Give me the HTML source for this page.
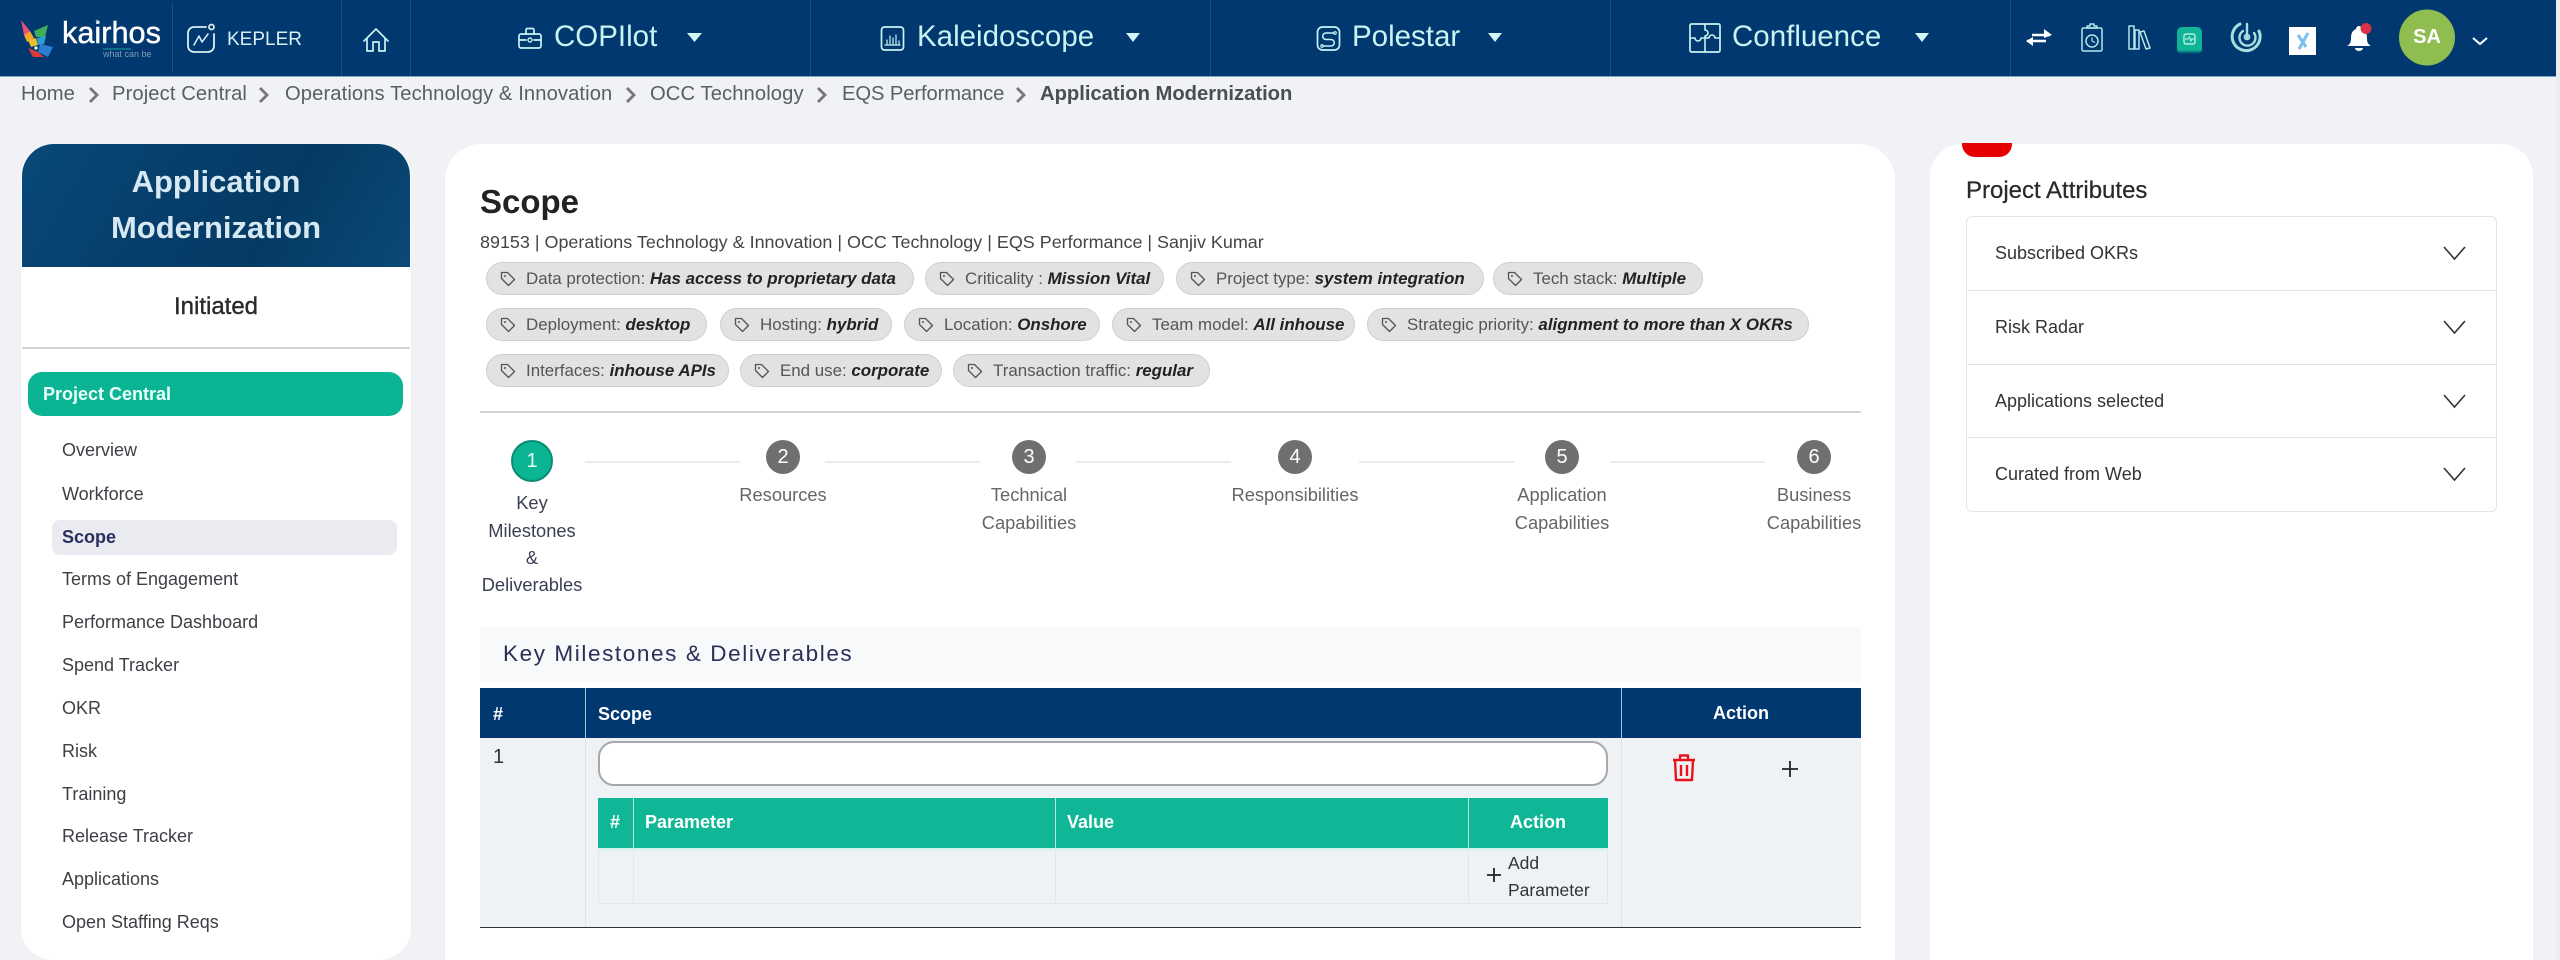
<!DOCTYPE html>
<html lang="en"><head><meta charset="utf-8"><title>Scope - Application Modernization</title>
<style>
html,body{margin:0;padding:0;width:2560px;height:960px;overflow:hidden;background:#f0f2f5;font-family:"Liberation Sans",sans-serif}
.a{position:absolute}
.t{position:absolute;white-space:nowrap;line-height:30px;height:30px}
.c{transform:translateX(-50%);text-align:center}
.hdr{left:0;top:0;width:2556px;height:76px;background:#00386f;border-bottom:1px solid #7fa3c4}
.dv{top:0;width:1px;height:76px;background:#1c4f83}
.nav{font-size:29.5px;color:#c9f3f3}
.bc{font-size:20.2px;color:#5a5e63}
.panel{background:#fff;top:144px;height:816px}
.mi{left:62px;font-size:18px;color:#3c3f44}
.chip{position:absolute;height:33px;box-sizing:border-box;background:#e2e2e2;border:1px solid #cfcfcf;border-radius:17px;padding-left:39px;font-size:16.9px;line-height:31px;color:#555;white-space:nowrap}
.chip b{font-style:italic;color:#222}
.chip svg{position:absolute;left:13px;top:8px}
.st{font-size:18.3px;color:#666}
.circ{position:absolute;top:440px;width:34px;height:34px;border-radius:50%;background:#6f6f6f;color:#fff;font-size:20px;line-height:34px;text-align:center}
.line{position:absolute;top:461px;height:2px;background:#ebebeb}
.th{font-size:18px;font-weight:bold;color:#fff}
.acc{left:1995px;font-size:18px;color:#333}
</style></head><body>

<div class="a hdr"></div>
<div class="a dv" style="left:172px;top:4px;height:68px"></div>
<div class="a dv" style="left:341px"></div>
<div class="a dv" style="left:410px"></div>
<div class="a dv" style="left:810px"></div>
<div class="a dv" style="left:1210px"></div>
<div class="a dv" style="left:1610px"></div>
<div class="a dv" style="left:2010px"></div>

<div class="t" style="left:62px;top:18px;font-size:30.7px;color:#fff;-webkit-text-stroke:.4px #fff">kairhos</div>
<div class="t" style="left:103px;top:39px;font-size:9px;color:#7f9fb8">what can be</div>
<div class="t" style="left:227px;top:25px;font-size:19px;color:#d9eff2">KEPLER</div>

<div class="t nav" style="left:554px;top:22px">COPIlot</div>
<div class="t nav" style="left:917px;top:22px">Kaleidoscope</div>
<div class="t nav" style="left:1352px;top:22px">Polestar</div>
<div class="t nav" style="left:1732px;top:22px">Confluence</div>

<!-- breadcrumb -->
<div class="t bc" style="left:21px;top:79px">Home</div>
<div class="t bc" style="left:112px;top:79px;letter-spacing:.1px">Project Central</div>
<div class="t bc" style="left:285px;top:79px;letter-spacing:.1px">Operations Technology &amp; Innovation</div>
<div class="t bc" style="left:650px;top:79px;letter-spacing:.1px">OCC Technology</div>
<div class="t bc" style="left:842px;top:79px;letter-spacing:-.1px">EQS Performance</div>
<div class="t bc" style="left:1040px;top:79px;color:#4a4e53;font-weight:bold">Application Modernization</div>

<!-- left panel -->
<div class="a panel" style="left:21px;width:390px;border-radius:32px"></div>
<div class="a" style="left:22px;top:144px;width:388px;height:123px;border-radius:32px 32px 0 0;background:linear-gradient(120deg,#07497a 0%,#073f6c 35%,#053a63 65%,#0a4a76 100%)"></div>
<div class="t c" style="left:216px;top:167px;font-size:31px;font-weight:bold;color:#d6e8f2">Application</div>
<div class="t c" style="left:216px;top:213px;font-size:31px;font-weight:bold;color:#d6e8f2">Modernization</div>
<div class="t c" style="left:216px;top:292px;font-size:24px;color:#2b2b2b;-webkit-text-stroke:.4px #2b2b2b">Initiated</div>
<div class="a" style="left:22px;top:347px;width:388px;height:2px;background:#d6d6d6"></div>
<div class="a" style="left:28px;top:372px;width:375px;height:44px;border-radius:14px;background:#0bb594"></div>
<div class="t" style="left:43px;top:379px;font-size:18px;font-weight:bold;color:#eafff9">Project Central</div>
<div class="a" style="left:52px;top:520px;width:345px;height:35px;border-radius:8px;background:#e9ebf0"></div>
<div class="t mi" style="top:435px">Overview</div>
<div class="t mi" style="top:479px">Workforce</div>
<div class="t mi" style="top:522px;font-weight:bold;color:#2a2f5f">Scope</div>
<div class="t mi" style="top:564px">Terms of Engagement</div>
<div class="t mi" style="top:607px">Performance Dashboard</div>
<div class="t mi" style="top:650px">Spend Tracker</div>
<div class="t mi" style="top:693px">OKR</div>
<div class="t mi" style="top:736px">Risk</div>
<div class="t mi" style="top:779px">Training</div>
<div class="t mi" style="top:821px">Release Tracker</div>
<div class="t mi" style="top:864px">Applications</div>
<div class="t mi" style="top:907px">Open Staffing Reqs</div>

<!-- centre panel -->
<div class="a panel" style="left:445px;width:1450px;border-radius:36px 36px 0 0"></div>
<div class="t" style="left:480px;top:187px;font-size:33px;font-weight:bold;color:#222">Scope</div>
<div class="t" style="left:480px;top:227px;font-size:17.95px;color:#444">89153 | Operations Technology &amp; Innovation | OCC Technology | EQS Performance | Sanjiv Kumar</div>

<svg width="0" height="0" style="position:absolute"><defs><symbol id="tag" viewBox="0 0 16 16"><path d="M1.500 1.500H7.500L14.500 8.500 8.500 14.500 1.500 7.500Z" fill="none" stroke="#555" stroke-width="1.300" stroke-linejoin="round"/><circle cx="5" cy="5" r="1" fill="#555"/></symbol></defs></svg>

<div class="chip" style="left:486px;top:262px;width:428px"><svg width="16" height="16"><use href="#tag"/></svg>Data protection: <b>Has access to proprietary data</b></div>
<div class="chip" style="left:925px;top:262px;width:239px"><svg width="16" height="16"><use href="#tag"/></svg>Criticality : <b>Mission Vital</b></div>
<div class="chip" style="left:1176px;top:262px;width:308px"><svg width="16" height="16"><use href="#tag"/></svg>Project type: <b>system integration</b></div>
<div class="chip" style="left:1493px;top:262px;width:210px"><svg width="16" height="16"><use href="#tag"/></svg>Tech stack: <b>Multiple</b></div>
<div class="chip" style="left:486px;top:308px;width:221px"><svg width="16" height="16"><use href="#tag"/></svg>Deployment: <b>desktop</b></div>
<div class="chip" style="left:720px;top:308px;width:172px"><svg width="16" height="16"><use href="#tag"/></svg>Hosting: <b>hybrid</b></div>
<div class="chip" style="left:904px;top:308px;width:196px"><svg width="16" height="16"><use href="#tag"/></svg>Location: <b>Onshore</b></div>
<div class="chip" style="left:1112px;top:308px;width:243px"><svg width="16" height="16"><use href="#tag"/></svg>Team model: <b>All inhouse</b></div>
<div class="chip" style="left:1367px;top:308px;width:442px"><svg width="16" height="16"><use href="#tag"/></svg>Strategic priority: <b>alignment to more than X OKRs</b></div>
<div class="chip" style="left:486px;top:354px;width:243px"><svg width="16" height="16"><use href="#tag"/></svg>Interfaces: <b>inhouse APIs</b></div>
<div class="chip" style="left:740px;top:354px;width:202px"><svg width="16" height="16"><use href="#tag"/></svg>End use: <b>corporate</b></div>
<div class="chip" style="left:953px;top:354px;width:257px"><svg width="16" height="16"><use href="#tag"/></svg>Transaction traffic: <b>regular</b></div>

<div class="a" style="left:480px;top:411px;width:1381px;height:2px;background:#d2d2d2"></div>

<!-- stepper -->
<div class="a" style="left:511px;top:440px;width:38px;height:38px;border:2px solid #0a8d74;border-radius:50%;background:#0bb594;color:#e8fff8;font-size:20px;line-height:38px;text-align:center">1</div>
<div class="circ" style="left:766px">2</div>
<div class="circ" style="left:1012px">3</div>
<div class="circ" style="left:1278px">4</div>
<div class="circ" style="left:1545px">5</div>
<div class="circ" style="left:1797px">6</div>
<div class="line" style="left:585px;width:155px"></div>
<div class="line" style="left:825px;width:155px"></div>
<div class="line" style="left:1076px;width:155px"></div>
<div class="line" style="left:1359px;width:155px"></div>
<div class="line" style="left:1610px;width:155px"></div>
<div class="t c st" style="left:532px;top:488px;color:#3a3f55">Key</div>
<div class="t c st" style="left:532px;top:516px;color:#3a3f55">Milestones</div>
<div class="t c st" style="left:532px;top:543px;color:#3a3f55">&amp;</div>
<div class="t c st" style="left:532px;top:570px;color:#3a3f55">Deliverables</div>
<div class="t c st" style="left:783px;top:480px">Resources</div>
<div class="t c st" style="left:1029px;top:480px">Technical</div>
<div class="t c st" style="left:1029px;top:508px">Capabilities</div>
<div class="t c st" style="left:1295px;top:480px">Responsibilities</div>
<div class="t c st" style="left:1562px;top:480px">Application</div>
<div class="t c st" style="left:1562px;top:508px">Capabilities</div>
<div class="t c st" style="left:1814px;top:480px">Business</div>
<div class="t c st" style="left:1814px;top:508px">Capabilities</div>

<!-- section -->
<div class="a" style="left:480px;top:627px;width:1381px;height:55px;background:#f8f9fb"></div>
<div class="t" style="left:503px;top:639px;font-size:22.5px;letter-spacing:1.6px;color:#2a2f55">Key Milestones &amp; Deliverables</div>

<!-- main table -->
<div class="a" style="left:480px;top:688px;width:1381px;height:50px;background:#00386f"></div>
<div class="a" style="left:480px;top:738px;width:1381px;height:189px;background:#eff2f5;border-bottom:1.5px solid #333"></div>
<div class="a" style="left:585px;top:688px;width:1px;height:50px;background:#a9c1d6"></div>
<div class="a" style="left:1621px;top:688px;width:1px;height:50px;background:#a9c1d6"></div>
<div class="a" style="left:585px;top:738px;width:1px;height:189px;background:#dfe3e7"></div>
<div class="a" style="left:1621px;top:738px;width:1px;height:189px;background:#dfe3e7"></div>
<div class="t th" style="left:493px;top:699px">#</div>
<div class="t th" style="left:598px;top:699px">Scope</div>
<div class="t th c" style="left:1741px;top:698px">Action</div>
<div class="t" style="left:493px;top:742px;font-size:20px;color:#333">1</div>
<div class="a" style="left:598px;top:741px;width:1010px;height:45px;box-sizing:border-box;background:#fff;border:2.5px solid #a8a8a8;border-radius:16px"></div>

<!-- sub table -->
<div class="a" style="left:598px;top:798px;width:1010px;height:50px;background:#0fb796"></div>
<div class="a" style="left:598px;top:848px;width:1010px;height:3px;background:#d8f0ee"></div>
<div class="a" style="left:598px;top:851px;height:53px;border:1px solid #e2e6e9;border-top:0;box-sizing:border-box;width:1010px"></div>
<div class="a" style="left:633px;top:798px;width:1px;height:50px;background:#b5e8dc"></div>
<div class="a" style="left:1055px;top:798px;width:1px;height:50px;background:#b5e8dc"></div>
<div class="a" style="left:1468px;top:798px;width:1px;height:50px;background:#b5e8dc"></div>
<div class="a" style="left:633px;top:851px;width:1px;height:53px;background:#e2e6e9"></div>
<div class="a" style="left:1055px;top:851px;width:1px;height:53px;background:#e2e6e9"></div>
<div class="a" style="left:1468px;top:851px;width:1px;height:53px;background:#e2e6e9"></div>
<div class="t th c" style="left:615px;top:807px">#</div>
<div class="t th" style="left:645px;top:807px">Parameter</div>
<div class="t th" style="left:1067px;top:807px">Value</div>
<div class="t th c" style="left:1538px;top:807px">Action</div>
<div class="t" style="left:1508px;top:848px;font-size:17.5px;color:#333">Add</div>
<div class="t" style="left:1508px;top:875px;font-size:17.5px;color:#333">Parameter</div>

<!-- right panel -->
<div class="a panel" style="left:1930px;width:603px;border-radius:32px 32px 0 0"></div>
<div class="a" style="left:1962px;top:143px;width:50px;height:14px;background:#e60000;border-radius:0 0 13px 13px"></div>
<div class="t" style="left:1966px;top:176px;font-size:24px;color:#2a2a2a;-webkit-text-stroke:.25px #2a2a2a">Project Attributes</div>
<div class="a" style="left:1966px;top:216px;width:531px;height:296px;box-sizing:border-box;border:1px solid #e4e4e4;border-radius:6px"></div>
<div class="a" style="left:1966px;top:290px;width:531px;height:1px;background:#e4e4e4"></div>
<div class="a" style="left:1966px;top:364px;width:531px;height:1px;background:#e4e4e4"></div>
<div class="a" style="left:1966px;top:437px;width:531px;height:1px;background:#e4e4e4"></div>
<div class="t acc" style="top:238px">Subscribed OKRs</div>
<div class="t acc" style="top:312px">Risk Radar</div>
<div class="t acc" style="top:386px">Applications selected</div>
<div class="t acc" style="top:459px">Curated from Web</div>

<div class="a" style="left:2556px;top:0;width:4px;height:960px;background:#ececec"></div>

<!-- icons -->
<svg class="a" style="left:0;top:0;pointer-events:none" width="2560" height="960" viewBox="0 0 2560 960">
<!-- logo -->
<polygon points="21,20 30,31 24,35" fill="#e8507a"/>
<polygon points="24,35 30,31 34,38 27,42" fill="#f4a52a"/>
<polygon points="34,31 48,25 45,37 36,37" fill="#3fae5a"/>
<polygon points="28,40 36,38 38,45 31,47" fill="#e6c32e"/>
<polygon points="37,38 46,36 44,44 38,45" fill="#2b9fd6"/>
<polygon points="40,44 53,47 48,57 38,52" fill="#2a7fd0"/>
<polygon points="28,48 38,52 44,57 33,57" fill="#d93a3a"/>
<circle cx="36" cy="48" r="1.6" fill="#fff"/>
<circle cx="97" cy="21" r="1.3" fill="#9fb6c9"/>
<line x1="103" y1="49" x2="131" y2="49" stroke="#16a89a" stroke-width="1"/>

<g fill="none" stroke="#d9eff2" stroke-width="1.8" stroke-linecap="round" stroke-linejoin="round">
<!-- kepler -->
<path d="M206 27H194a6 6 0 0 0-6 6V46a6 6 0 0 0 6 6H208a6 6 0 0 0 6-6V34"/>
<circle cx="211.500" cy="27" r="2.500"/>
<path d="M194 45L199 36L202 42L208 34" stroke-width="1.5"/>
</g>
<g fill="none" stroke="#c9f3f3" stroke-width="1.7" stroke-linecap="round" stroke-linejoin="round">
<!-- home -->
<path d="M364 41L376 29L388 41M367 38V51H373V42H379V51H385V38"/>
<!-- briefcase -->
<rect x="519" y="34" width="22" height="14" rx="2"/>
<path d="M526 34V30a1.500 1.500 0 0 1 1.500-1.500H532.500a1.500 1.500 0 0 1 1.500 1.500V34M519 40H526M534 40H541"/>
<circle cx="530" cy="40" r="2" stroke-width="1.4"/>
<!-- kaleidoscope -->
<rect x="881.500" y="27" width="22" height="23" rx="3"/>
<path d="M885 45H900M887 44V40M890 44V36M893 44V38M896 44V35M899 44V41" stroke-width="1.2"/>
<!-- polestar -->
<rect x="1317.500" y="27" width="22" height="23" rx="5"/>
<path d="M1334 33H1326a3 3 0 0 0 0 6.500H1331a3 3 0 0 1 0 6.500H1323" stroke-width="1.5"/>
<circle cx="1335" cy="33" r="1.300" stroke-width="1.100"/><circle cx="1322" cy="46" r="1.300" stroke-width="1.100"/>
<!-- confluence puzzle -->
<rect x="1690" y="24" width="30" height="28" rx="1.500"/>
<path d="M1705 24V30a3 3 0 0 1 0 6V52M1690 38H1695a3 3 0 0 0 6 0H1709a3 3 0 0 1 6 0H1720" stroke-width="1.600"/>
</g>
<!-- carets -->
<g fill="#d4f5f5">
<polygon points="687,33 702,33 694.500,42"/>
<polygon points="1126,33 1140,33 1133,42"/>
<polygon points="1488,33 1502,33 1495,42"/>
<polygon points="1915,33 1929,33 1922,42"/>
</g>
<!-- swap -->
<g fill="none" stroke="#fff" stroke-width="2.600">
<path d="M2032 35H2050"/><path d="M2027 41H2046"/>
</g>
<polygon points="2044,29 2052,35 2044,38" fill="#fff"/>
<polygon points="2033,37 2026,41 2033,46" fill="#fff"/>
<!-- clipboard -->
<g fill="none" stroke="#b6e6ea" stroke-width="1.500" stroke-linejoin="round">
<rect x="2082" y="28" width="20" height="23" rx="1.500"/>
<path d="M2087 28V26H2090V24H2094V26H2097V28Z"/>
<circle cx="2092" cy="41" r="6"/>
<path d="M2092 37.500V41L2095 42.500" stroke-width="1.200"/>
<!-- books -->
<path d="M2129 26H2134V49H2129ZM2135 30H2139V49H2135ZM2140 32L2144 31L2150 48L2146 49Z"/>
</g>
<defs><linearGradient id="gf" x1="0" y1="0" x2="0" y2="1"><stop offset="0" stop-color="#0fb596"/><stop offset=".85" stop-color="#0fb596"/><stop offset="1" stop-color="#0fb596" stop-opacity="0"/></linearGradient></defs>
<rect x="2177" y="27" width="25" height="27" rx="5" fill="url(#gf)"/>
<rect x="2184" y="34" width="11" height="10" rx="2" fill="none" stroke="#d6f7ef" stroke-width="1.200"/>
<path d="M2185 39H2188L2189.500 37L2191 41L2192 39H2194" fill="none" stroke="#d6f7ef" stroke-width=".9"/>
<!-- radar -->
<g fill="none" stroke="#a7dfe0" stroke-linecap="round">
<path d="M2240 24A14 14 0 1 0 2259 31" stroke-width="3"/>
<path d="M2243 31A8 8 0 1 0 2254 33" stroke-width="2.400"/>
<path d="M2247 24V38" stroke-width="2.400"/>
<circle cx="2247" cy="37" r="2.400" stroke-width="2"/>
</g>
<!-- white square -->
<rect x="2289" y="27" width="27" height="28" fill="#fff"/>
<path d="M2298 35L2306 47M2308 33L2299 49" stroke="#7cc0ec" stroke-width="3" fill="none"/>
<!-- bell -->
<path d="M2359 26a3 3 0 0 1 3 3c5 2 5 7 5 10c0 4 2 6 4 7H2347c2-1 4-3 4-7c0-3 0-8 5-10a3 3 0 0 1 3-3Z" fill="#fff"/>
<path d="M2355 48a4 3 0 0 0 8 0Z" fill="#fff"/>
<circle cx="2366" cy="28.500" r="5.500" fill="#dd3146"/>
<!-- avatar -->
<circle cx="2427" cy="37.500" r="28" fill="#8fbd50"/>
<path d="M2473 38L2480 44L2487 38" fill="none" stroke="#fff" stroke-width="2"/>

<!-- trash -->
<g fill="none" stroke="#e8121e" stroke-width="2.400" stroke-linejoin="round">
<path d="M1673 760H1695"/><path d="M1680 760V755.500H1688V760"/>
<path d="M1675 760L1676 780H1692L1693 760"/>
</g>
<path d="M1681 765V776M1687 765V776" stroke="#e8121e" stroke-width="2.400"/>
<!-- plus -->
<path d="M1790 761V777M1782 769H1798M1494 868V882M1487 875H1501" stroke="#222" stroke-width="1.800"/>
<!-- chevrons -->
<g fill="none" stroke="#333" stroke-width="1.600">
<path d="M2444 247L2454.500 259L2465 247"/>
<path d="M2444 321L2454.500 333L2465 321"/>
<path d="M2444 395L2454.500 407L2465 395"/>
<path d="M2444 468L2454.500 480L2465 468"/>
</g>
<!-- breadcrumb separators -->
<g fill="none" stroke="#777" stroke-width="2.800">
<path d="M90 88L97 95L90 102"/><path d="M260 88L267 95L260 102"/><path d="M627 88L634 95L627 102"/><path d="M818 88L825 95L818 102"/><path d="M1017 88L1024 95L1017 102"/>
</g>
</svg>
<div class="t" style="left:2427px;top:22px;transform:translateX(-50%);font-size:20px;font-weight:bold;color:#fff;z-index:5">SA</div>
</body></html>
